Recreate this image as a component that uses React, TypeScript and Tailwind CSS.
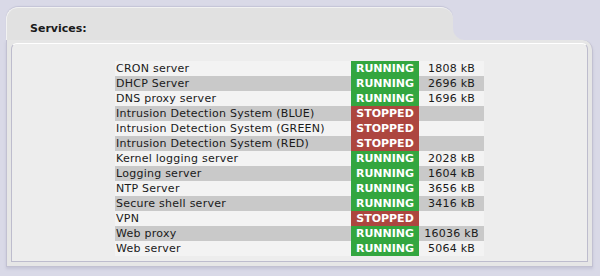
const services: { name: string; running: boolean; memory?: string }[] = [
  { name: 'CRON server', running: true, memory: '1808 kB' },
  { name: 'DHCP Server', running: true, memory: '2696 kB' },
  { name: 'DNS proxy server', running: true, memory: '1696 kB' },
  { name: 'Intrusion Detection System (BLUE)', running: false },
  { name: 'Intrusion Detection System (GREEN)', running: false },
  { name: 'Intrusion Detection System (RED)', running: false },
  { name: 'Kernel logging server', running: true, memory: '2028 kB' },
  { name: 'Logging server', running: true, memory: '1604 kB' },
  { name: 'NTP Server', running: true, memory: '3656 kB' },
  { name: 'Secure shell server', running: true, memory: '3416 kB' },
  { name: 'VPN', running: false },
  { name: 'Web proxy', running: true, memory: '16036 kB' },
  { name: 'Web server', running: true, memory: '5064 kB' },
]

const App = () => {
  return (
    <div
      className="w-[600px] h-[276px] bg-[#d9d9e7] pt-[7px] pl-[6px] pr-[7px] text-[11px] text-[#1a1a1a]"
      style={{ fontFamily: '"DejaVu Sans", Verdana, sans-serif' }}
    >
      {/* tab row */}
      <div className="flex h-[33px]">
        <div className="w-[447px] h-full bg-[#e1e1e1] rounded-t-[12px] border-t border-l border-[#f2f2f2] shadow-[0_-1px_1px_#c4c4d6] pl-[23px] pt-[13px] font-bold">
          Services:
        </div>
        <div className="flex-1 h-full bg-[#e1e1e1]">
          <div className="h-full bg-[#d9d9e7] rounded-bl-[12px]" />
        </div>
      </div>

      {/* main panel */}
      <div className="h-[227px] bg-[#e6e6e6] rounded-tr-[10px] border-l border-r border-b border-[#c2c1d2] shadow-[0_2px_3px_#c4c4d6] pt-[3px] px-[4px] pb-[4px]">
        <div className="h-full bg-[#ededed] rounded-tl-[6px] rounded-tr-[6px] border border-t-white border-l-[#bdbccd] border-b-[#bdbccd] border-r-[#bdbccd] pt-[17px] flex justify-center">
          <table className="border-collapse leading-[15px] h-fit">
            <tbody>
              {services.map((s, i) => (
                <tr
                  key={`svc-${i}-${s.name}`}
                  className={i % 2 === 0 ? 'bg-[#f3f3f3]' : 'bg-[#c9c9c9]'}
                >
                  <td className="w-[236px] h-[15px] p-0 pl-px tracking-[0.25px]">{s.name}</td>
                  <td
                    className={
                      'w-[68px] p-0 text-center font-bold text-white ' +
                      (s.running ? 'bg-[#33a63f]' : 'bg-[#ad463f]')
                    }
                  >
                    {s.running ? 'RUNNING' : 'STOPPED'}
                  </td>
                  <td className="w-[65px] p-0 text-center tracking-[0.25px]">{s.memory ?? ''}</td>
                </tr>
              ))}
            </tbody>
          </table>
        </div>
      </div>
    </div>
  )
}

export default App
